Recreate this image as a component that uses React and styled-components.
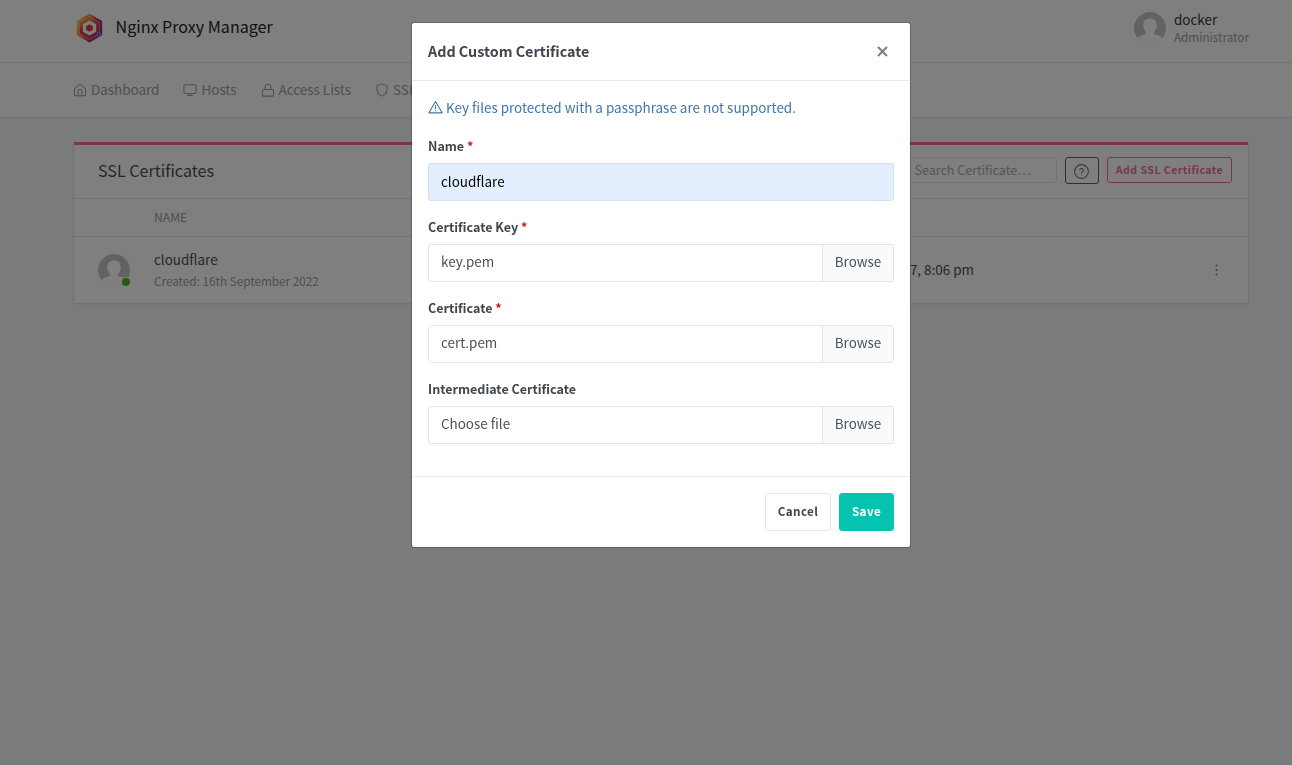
import React from "react";
import styled, { createGlobalStyle } from "styled-components";

const GlobalStyle = createGlobalStyle`
  *, *::before, *::after { box-sizing: border-box; }
  body {
    margin: 0;
    height: 765px;
    overflow: hidden;
    background: #f5f7fb;
    color: #495057;
    font-family: "Noto Sans CJK SC", "Open Sans", sans-serif;
    font-size: 13.44px;
    line-height: 22.5px;
  }
`;

const Container = styled.div`
  width: 1176px;
  margin-left: 73px;
  display: flex;
  align-items: center;
`;

const Header = styled.header`
  height: 63px;
  background: #fff;
  border-bottom: 1px solid rgba(0, 40, 100, 0.12);
`;

const HeaderInner = styled(Container)`
  height: 56px;
  justify-content: space-between;
`;

const Brand = styled.div`
  display: flex;
  align-items: center;
  gap: 13px;
  padding-left: 2.5px;
  font-size: 16.1px;
  color: #212529;
  line-height: 28px;
`;

const BrandName = styled.span`
  padding-bottom: 4px;
`;

const User = styled.div`
  display: flex;
  gap: 8px;
  align-items: center;
`;

const UserName = styled.div`
  padding-top: 1px;
  line-height: 17px;
  color: #343a40;
`;

const Muted = styled.div`
  font-size: 11.72px;
  line-height: 19px;
  color: #9aa0ac;
`;

const UserRole = styled(Muted)`
  line-height: 17px;
  padding-bottom: 2px;
`;

const Nav = styled.nav`
  height: 55px;
  background: #fff;
  border-bottom: 1px solid rgba(0, 40, 100, 0.12);
`;

const NavInner = styled(Container)`
  height: 54px;
  gap: 24px;
`;

const NavItem = styled.a`
  display: flex;
  align-items: center;
  gap: 4px;
  padding-bottom: 2px;
  color: #9aa0ac;
  white-space: nowrap;
  svg { position: relative; top: 1px; }
`;

const Card = styled.section`
  width: 1176px;
  margin: 24px 0 0 73px;
  background: #fff;
  border: 1px solid rgba(0, 40, 100, 0.12);
  border-top: 3px solid #f66d9b;
  border-radius: 3px;
  box-shadow: 0 1px 2px rgba(0, 0, 0, 0.05);
`;

const CardHeader = styled.div`
  height: 54px;
  display: flex;
  align-items: center;
  justify-content: space-between;
  padding: 0 16px 2px 24px;
  border-bottom: 1px solid rgba(0, 40, 100, 0.12);
`;

const CardTitle = styled.h3`
  margin: 0;
  font-size: 16.1px;
  font-weight: 400;
`;

const Tools = styled.div`
  display: flex;
  align-items: flex-start;
  gap: 8px;
  height: 28px;
`;

const Search = styled.div`
  width: 180px;
  height: 26px;
  padding-left: 36.5px;
  border: 1px solid rgba(0, 40, 100, 0.12);
  border-radius: 0 3px 3px 0;
  font-size: 12.5px;
  line-height: 24px;
  color: #a5abb2;
`;

const SmallButton = styled.button`
  width: ${(p) => p.$width}px;
  height: ${(p) => p.$height}px;
  display: flex;
  align-items: center;
  justify-content: center;
  padding: ${(p) => p.$pad || "0"};
  background: transparent;
  border: 1px solid ${(p) => p.$border || p.$color};
  border-radius: 3px;
  color: ${(p) => p.$color};
  font: 700 10.7px/24px "Noto Sans CJK SC", sans-serif;
  letter-spacing: 0.4px;
  white-space: nowrap;
`;

const Row = styled.div`
  display: grid;
  grid-template-columns: 32px 1fr 400px 258px;
  align-items: center;
  height: ${(p) => p.$height}px;
  padding: 0 16px 0 24px;
  border-bottom: ${(p) => (p.$last ? "0" : "1px solid rgba(0, 40, 100, 0.12)")};
`;

const NameCell = styled.div`
  padding: 0 0 2px 24px;
`;

const HeadCell = styled.div`
  grid-column: 2;
  padding-left: 24px;
  font-size: 12.2px;
  color: #9aa0ac;
`;

const DateCell = styled.div`
  padding-bottom: 2px;
  text-align: right;
`;

const MenuCell = styled.div`
  display: flex;
  justify-content: flex-end;
  padding-right: 8px;
`;

const AvatarBox = styled.div`
  position: relative;
  width: 32px;
  height: 32px;
  svg { display: block; }
`;

const Status = styled.span`
  position: absolute;
  right: 0;
  bottom: 0;
  width: 8px;
  height: 8px;
  border-radius: 50%;
  background: #4cb80c;
  box-shadow: 0 0 0 1px #fff;
`;

const Backdrop = styled.div`
  position: fixed;
  inset: 0;
  background: rgba(0, 0, 0, 0.5);
  display: flex;
  align-items: flex-start;
  padding: 22px 0 0 411px;
`;

const Dialog = styled.div`
  width: 500px;
  background: #fff;
  background-clip: padding-box;
  border: 1px solid rgba(0, 0, 0, 0.2);
  border-radius: 3px;
`;

const DialogHeader = styled.div`
  height: 58px;
  display: flex;
  align-items: center;
  justify-content: space-between;
  padding: 0 22px 1px 16px;
  border-bottom: 1px solid #e9ecef;
`;

const DialogTitle = styled.h5`
  margin: 0;
  font-size: 14.32px;
  font-weight: 700;
  color: #3f464d;
`;

const DialogBody = styled.div`
  height: 395px;
  padding: 15px 16px 16px;
`;

const Notice = styled.div`
  display: flex;
  align-items: center;
  gap: 3px;
  height: 22px;
  margin-bottom: 17px;
  color: #3f76ab;
  white-space: nowrap;
`;

const Field = styled.div`
  margin-bottom: 16px;
`;

const Label = styled.div`
  margin-bottom: 7px;
  font-size: 12.54px;
  font-weight: 700;
  line-height: 20px;
  height: 20px;
  color: #3f464d;
`;

const FirstField = styled(Field)`
  ${Label} { height: 21px; line-height: 21px; }
`;

const Required = styled.span`
  color: #cd201f;
`;

const Control = styled.div`
  display: flex;
  height: 38px;
  border: 1px solid ${(p) => (p.$filled ? "#d5dfee" : "#e0e5ec")};
  border-radius: 3px;
  background: ${(p) => (p.$filled ? "#e3eefe" : "#fff")};
  color: ${(p) => (p.$filled ? "#000" : "#495057")};
  line-height: ${(p) => (p.$filled ? 35 : 33)}px;
  overflow: hidden;
`;

const Value = styled.div`
  flex: 1;
  padding-left: 12px;
`;

const Browse = styled.div`
  width: 71px;
  text-align: center;
  background: #f9fafc;
  border-left: 1px solid #e0e5ec;
`;

const DialogFooter = styled.div`
  height: 71px;
  display: flex;
  justify-content: flex-end;
  gap: 8px;
  padding: 16px;
  border-top: 1px solid #e9ecef;
`;

const Button = styled.button`
  width: ${(p) => p.$width}px;
  height: 38px;
  padding: 0 0 3px;
  border: 1px solid ${(p) => (p.$primary ? "#05c3b1" : "#e0e5ec")};
  border-radius: 3px;
  background: ${(p) => (p.$primary ? "#05c3b1" : "#fff")};
  color: ${(p) => (p.$primary ? "#fff" : "#3f464d")};
  font: 700 11.7px/33px "Noto Sans CJK SC", sans-serif;
  letter-spacing: 0.4px;
`;

const Icon = ({ size = 14, stroke = 1.8, children }) => (
  <svg width={size} height={size} viewBox="0 0 24 24" fill="none" stroke="currentColor"
    strokeWidth={stroke} strokeLinecap="round" strokeLinejoin="round">
    {children}
  </svg>
);

const HomeIcon = () => (
  <Icon>
    <path d="M2.500 9.500 12 2l9.500 7.500V20a2 2 0 0 1-2 2h-15a2 2 0 0 1-2-2Z" />
    <path d="M8.500 22v-7.500a3.500 3.500 0 0 1 7 0V22" />
  </Icon>
);

const MonitorIcon = () => (
  <Icon>
    <rect x="1.500" y="3" width="21" height="15" rx="2" />
    <path d="M7.500 21.500h9M9.500 18v3.500M14.500 18v3.500" />
  </Icon>
);

const LockIcon = () => (
  <Icon>
    <rect x="2.500" y="11" width="19" height="11.500" rx="2" />
    <path d="M7 11V7a5 5 0 0 1 10 0v4" />
  </Icon>
);

const ShieldIcon = () => (
  <Icon>
    <path d="M12 22.500s8.500-4 8.500-10.500V4.500L12 1.500l-8.500 3V12c0 6.500 8.500 10.500 8.500 10.500Z" />
  </Icon>
);

const Avatar = ({ online }) => (
  <AvatarBox>
    <svg width="32" height="32" viewBox="0 0 32 32">
      <clipPath id="round"><circle cx="16" cy="16" r="16" /></clipPath>
      <g clipPath="url(#round)">
        <rect width="32" height="32" fill="#c5c5c5" />
        <path d="M16 6.500c-4.300 0-6.700 2.700-6.700 6.800 0 2.900 1 5.200 2.700 6.600v2c-3.500 1-7.500 2-9.500 5.600V33h27v-5.500c-2-3.600-6-4.600-9.500-5.600v-2c1.700-1.400 2.700-3.700 2.700-6.600 0-4.100-2.400-6.800-6.700-6.800Z" fill="#fff" />
      </g>
    </svg>
    {online && <Status />}
  </AvatarBox>
);

const Logo = () => (
  <svg width="27" height="30" viewBox="0 0 27 30">
    <defs>
      <linearGradient id="ring" x1="0" y1="0.200" x2="1" y2="0.700">
        <stop offset="0" stopColor="#f9c83a" />
        <stop offset="0.400" stopColor="#f08040" />
        <stop offset="0.650" stopColor="#b03070" />
        <stop offset="1" stopColor="#6a3594" />
      </linearGradient>
      <linearGradient id="band" x1="0.200" y1="0" x2="0.600" y2="1">
        <stop offset="0" stopColor="#f9b850" />
        <stop offset="0.500" stopColor="#e5403c" />
        <stop offset="1" stopColor="#c42a68" />
      </linearGradient>
    </defs>
    <path d="M13.500 1.200 25.700 8.200v13.800L13.500 29 1.300 22V8.200Z" fill="url(#ring)" stroke="url(#ring)" strokeLinejoin="round" />
    <path d="M13.500 3.500 23.500 9.300v11.500L13.500 26.500 3.500 20.800V9.300Z" fill="url(#band)" stroke="#f4d5d0" strokeWidth="0.400" />
    <path d="M13.500 8.400 19.400 11.800v6.400L13.500 21.600 7.600 18.200v-6.400Z" fill="#fff" stroke="#fff" strokeWidth="1.600" strokeLinejoin="round" />
    <path d="M13.500 12 16.200 13.500v3L13.500 18 10.800 16.500v-3Z" fill="#e23b35" stroke="#e23b35" strokeWidth="1.400" strokeLinejoin="round" />
    <circle cx="22.500" cy="21.500" r="1.700" fill="#6a3594" stroke="#d8c5e0" strokeWidth="0.700" />
    <circle cx="13.500" cy="2.800" r="1.100" fill="#f08040" stroke="#f9dca0" strokeWidth="0.500" />
  </svg>
);

const FileField = ({ label, required, file }) => (
  <Field>
    <Label>{label} {required && <Required>*</Required>}</Label>
    <Control>
      <Value>{file}</Value>
      <Browse>Browse</Browse>
    </Control>
  </Field>
);

export default function App() {
  return (
    <>
      <GlobalStyle />
      <Header>
        <HeaderInner>
          <Brand><Logo /><BrandName>Nginx Proxy Manager</BrandName></Brand>
          <User>
            <Avatar />
            <div>
              <UserName>docker</UserName>
              <UserRole>Administrator</UserRole>
            </div>
          </User>
        </HeaderInner>
      </Header>
      <Nav>
        <NavInner>
          <NavItem><HomeIcon />Dashboard</NavItem>
          <NavItem><MonitorIcon />Hosts</NavItem>
          <NavItem><LockIcon />Access Lists</NavItem>
          <NavItem><ShieldIcon />SSL Certificates</NavItem>
        </NavInner>
      </Nav>
      <Card>
        <CardHeader>
          <CardTitle>SSL Certificates</CardTitle>
          <Tools>
            <Search>Search Certificate…</Search>
            <SmallButton $width={34} $height={27} $pad="2px 1px 0 0" $color="#6e7687" $border="#5a626b">
              <Icon size={15}>
                <circle cx="12" cy="12" r="11" />
                <path d="M9 9.300a3.100 3.100 0 0 1 6 1c0 2-3 2.500-3 4M12 17.500v.1" />
              </Icon>
            </SmallButton>
            <SmallButton $width={125} $height={26} $color="#f66d9b">Add SSL Certificate</SmallButton>
          </Tools>
        </CardHeader>
        <Row $height={38}>
          <HeadCell>NAME</HeadCell>
        </Row>
        <Row $height={66} $last>
          <Avatar online />
          <NameCell>
            <div>cloudflare</div>
            <Muted>Created: 16th September 2022</Muted>
          </NameCell>
          <DateCell>2037, 8:06 pm</DateCell>
          <MenuCell>
            <svg width="16" height="16" viewBox="0 0 16 16" fill="#868e96">
              <circle cx="8.500" cy="3.500" r="1.100" />
              <circle cx="8.500" cy="8" r="1.100" />
              <circle cx="8.500" cy="12.500" r="1.100" />
            </svg>
          </MenuCell>
        </Row>
      </Card>
      <Backdrop>
        <Dialog>
          <DialogHeader>
            <DialogTitle>Add Custom Certificate</DialogTitle>
            <svg width="11" height="11" viewBox="0 0 11 11" stroke="#7f7f7f" strokeWidth="2">
              <path d="m1 1 9 9M10 1l-9 9" />
            </svg>
          </DialogHeader>
          <DialogBody>
            <Notice>
              <Icon size={15}>
                <path d="M12 2.500 1.500 20.500h21Z" />
                <path d="M12 9v5M12 17v.1" />
              </Icon>
              Key files protected with a passphrase are not supported.
            </Notice>
            <FirstField>
              <Label>Name <Required>*</Required></Label>
              <Control $filled><Value>cloudflare</Value></Control>
            </FirstField>
            <FileField label="Certificate Key" required file="key.pem" />
            <FileField label="Certificate" required file="cert.pem" />
            <FileField label="Intermediate Certificate" file="Choose file" />
          </DialogBody>
          <DialogFooter>
            <Button $width={66}>Cancel</Button>
            <Button $width={55} $primary>Save</Button>
          </DialogFooter>
        </Dialog>
      </Backdrop>
    </>
  );
}
